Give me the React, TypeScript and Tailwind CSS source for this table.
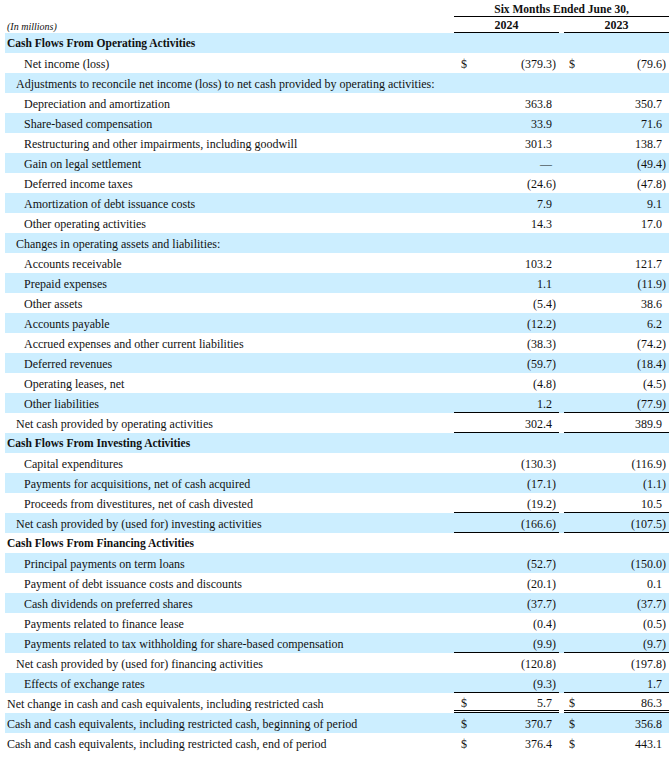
type Row = {
  label: string;
  head?: boolean;
  indent?: 0 | 1 | 2;
  a?: string;
  b?: string;
  dollar?: boolean;
  line?: "single" | "double";
};

const rows: Row[] = [
  { label: "Cash Flows From Operating Activities", head: true },
  { label: "Net income (loss)", indent: 2, a: "(379.3)", b: "(79.6)", dollar: true },
  { label: "Adjustments to reconcile net income (loss) to net cash provided by operating activities:", indent: 1 },
  { label: "Depreciation and amortization", indent: 2, a: "363.8", b: "350.7" },
  { label: "Share-based compensation", indent: 2, a: "33.9", b: "71.6" },
  { label: "Restructuring and other impairments, including goodwill", indent: 2, a: "301.3", b: "138.7" },
  { label: "Gain on legal settlement", indent: 2, a: "—", b: "(49.4)" },
  { label: "Deferred income taxes", indent: 2, a: "(24.6)", b: "(47.8)" },
  { label: "Amortization of debt issuance costs", indent: 2, a: "7.9", b: "9.1" },
  { label: "Other operating activities", indent: 2, a: "14.3", b: "17.0" },
  { label: "Changes in operating assets and liabilities:", indent: 1 },
  { label: "Accounts receivable", indent: 2, a: "103.2", b: "121.7" },
  { label: "Prepaid expenses", indent: 2, a: "1.1", b: "(11.9)" },
  { label: "Other assets", indent: 2, a: "(5.4)", b: "38.6" },
  { label: "Accounts payable", indent: 2, a: "(12.2)", b: "6.2" },
  { label: "Accrued expenses and other current liabilities", indent: 2, a: "(38.3)", b: "(74.2)" },
  { label: "Deferred revenues", indent: 2, a: "(59.7)", b: "(18.4)" },
  { label: "Operating leases, net", indent: 2, a: "(4.8)", b: "(4.5)" },
  { label: "Other liabilities", indent: 2, a: "1.2", b: "(77.9)", line: "single" },
  { label: "Net cash provided by operating activities", indent: 1, a: "302.4", b: "389.9", line: "single" },
  { label: "Cash Flows From Investing Activities", head: true },
  { label: "Capital expenditures", indent: 2, a: "(130.3)", b: "(116.9)" },
  { label: "Payments for acquisitions, net of cash acquired", indent: 2, a: "(17.1)", b: "(1.1)" },
  { label: "Proceeds from divestitures, net of cash divested", indent: 2, a: "(19.2)", b: "10.5", line: "single" },
  { label: "Net cash provided by (used for) investing activities", indent: 1, a: "(166.6)", b: "(107.5)", line: "single" },
  { label: "Cash Flows From Financing Activities", head: true },
  { label: "Principal payments on term loans", indent: 2, a: "(52.7)", b: "(150.0)" },
  { label: "Payment of debt issuance costs and discounts", indent: 2, a: "(20.1)", b: "0.1" },
  { label: "Cash dividends on preferred shares", indent: 2, a: "(37.7)", b: "(37.7)" },
  { label: "Payments related to finance lease", indent: 2, a: "(0.4)", b: "(0.5)" },
  { label: "Payments related to tax withholding for share-based compensation", indent: 2, a: "(9.9)", b: "(9.7)", line: "single" },
  { label: "Net cash provided by (used for) financing activities", indent: 1, a: "(120.8)", b: "(197.8)" },
  { label: "Effects of exchange rates", indent: 2, a: "(9.3)", b: "1.7", line: "single" },
  { label: "Net change in cash and cash equivalents, including restricted cash", indent: 0, a: "5.7", b: "86.3", dollar: true, line: "double" },
  { label: "Cash and cash equivalents, including restricted cash, beginning of period", indent: 0, a: "370.7", b: "356.8", dollar: true },
  { label: "Cash and cash equivalents, including restricted cash, end of period", indent: 0, a: "376.4", b: "443.1", dollar: true },
];

const indentClass = ["pl-[2px]", "pl-[11px]", "pl-[19px]"];

const Amount = ({
  value,
  dollar,
  line,
  first,
}: {
  value?: string;
  dollar?: boolean;
  line?: "single" | "double";
  first?: boolean;
}) => {
  const neg = value?.endsWith(")");
  const main = neg ? value!.slice(0, -1) : value;
  const border =
    line === "double"
      ? "border-b-[3px] border-double border-black"
      : line === "single"
        ? "border-b border-black"
        : "";
  return (
    <div
      className={`flex h-full w-[105px] items-center ${first ? "pl-[7px]" : "pl-[5px]"} ${border}`}
    >
      <span className="w-[10px]">{dollar ? "$" : ""}</span>
      <span className="flex-1 text-right">{main}</span>
      <span className="w-[7px]">{neg ? ")" : ""}</span>
    </div>
  );
};

export default function App() {
  return (
    <div
      className="min-h-screen w-[672px] bg-white pl-[5px] text-[12px] text-[#111]"
      style={{ fontFamily: '"Liberation Serif", "Times New Roman", serif' }}
    >
      <div className="w-[664px]">
        {/* column headings */}
        <div className="flex h-[17px] items-end">
          <div className="flex-1" />
          <div className="w-[215px] border-b border-black pb-[1px] text-center text-[11.5px] font-bold leading-none">
            Six Months Ended June 30,
          </div>
        </div>
        <div className="flex h-[16px] items-end">
          <div className="flex-1 pb-[1px] pl-[2px] text-[10px] italic leading-none">(In millions)</div>
          <div className="w-[105px] border-b border-black pb-[1px] text-center font-bold leading-none">2024</div>
          <div className="w-[5px]" />
          <div className="w-[105px] border-b border-black pb-[1px] text-center font-bold leading-none">2023</div>
        </div>

        {rows.map((r, i) => (
          <div
            key={i}
            className={`flex h-[20px] items-center ${i % 2 === 0 ? "bg-[#cceeff]" : "bg-white"}`}
          >
            <div
              className={`flex-1 whitespace-nowrap pt-[2px] ${indentClass[r.head ? 0 : (r.indent ?? 2)]} ${r.head ? "text-[11.5px] font-bold" : ""}`}
            >
              {r.label}
            </div>
            {r.head || r.a === undefined ? null : (
              <div className="flex h-full pt-[2px]">
                <Amount value={r.a} dollar={r.dollar} line={r.line} first />
                <div className="w-[5px]" />
                <Amount value={r.b} dollar={r.dollar} line={r.line} />
              </div>
            )}
          </div>
        ))}
      </div>
    </div>
  );
}
